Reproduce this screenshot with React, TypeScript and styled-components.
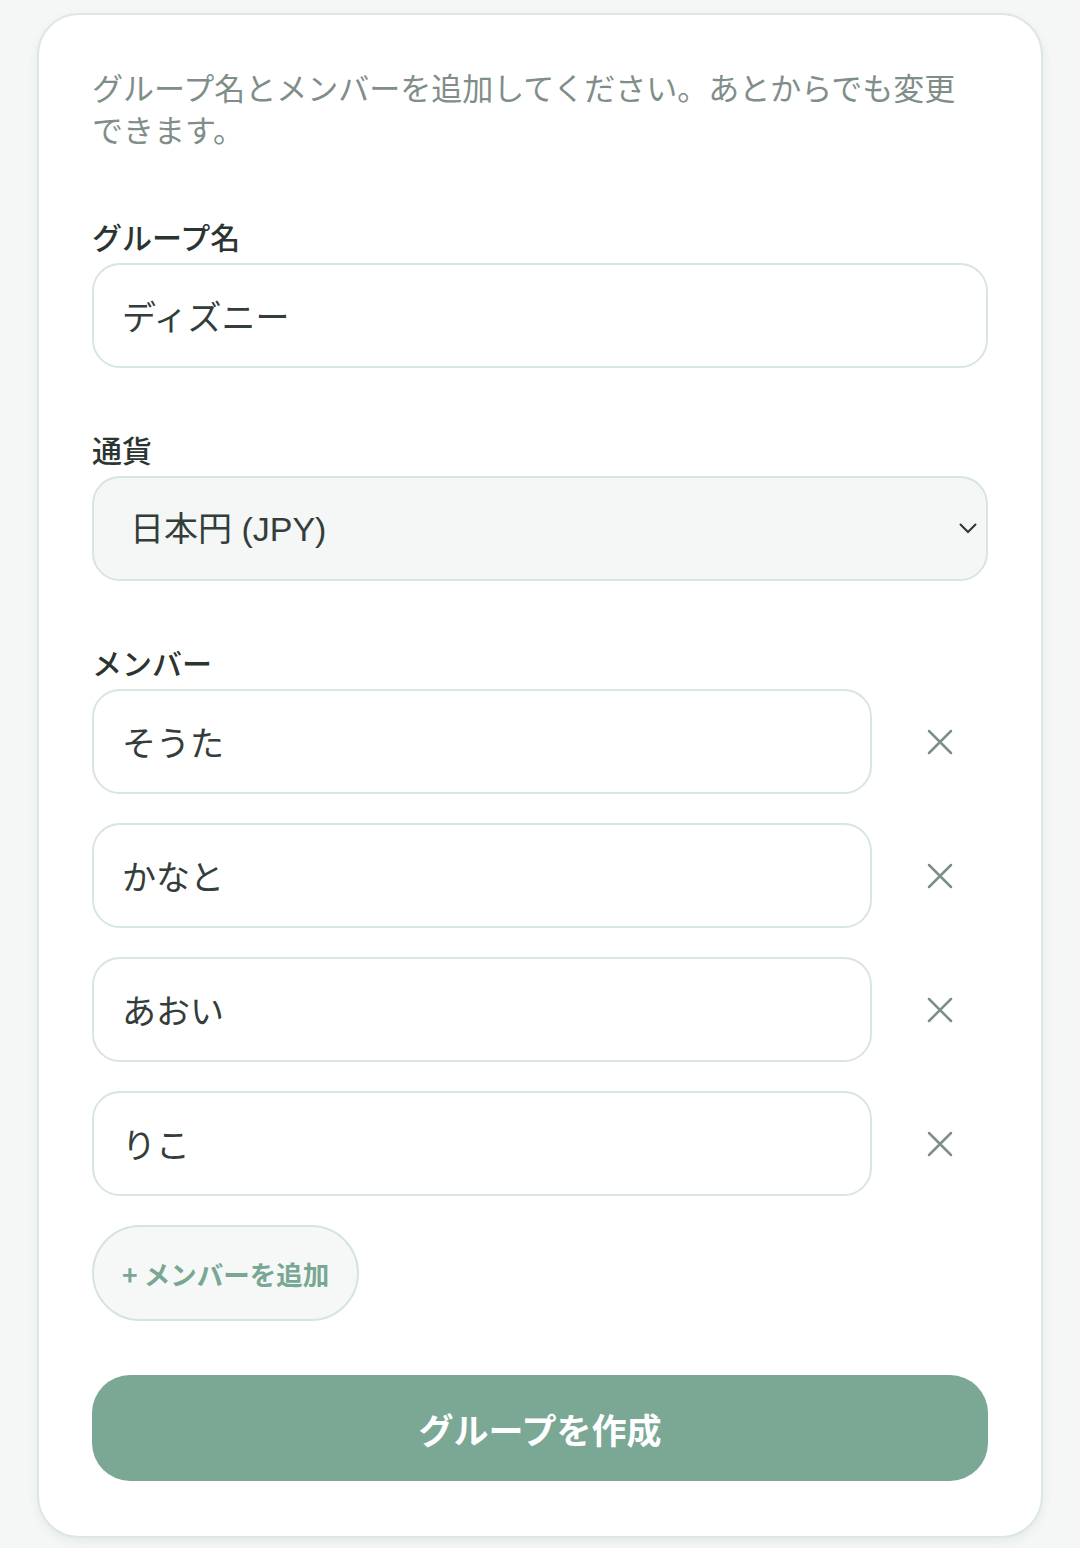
import { useState } from 'react';
import styled, { createGlobalStyle } from 'styled-components';

const GlobalStyle = createGlobalStyle`
  * {
    box-sizing: border-box;
  }
  body {
    margin: 0;
    background: #f4f7f6;
    font-family: "Noto Sans CJK JP", "Noto Sans", sans-serif;
    color: #2b3431;
  }
`;

const Page = styled.main`
  padding: 13px 37px 12px;
`;

const Card = styled.section`
  background: #ffffff;
  border: 2px solid #dce7e4;
  border-radius: 42px;
  box-shadow: 0 4px 10px rgba(60, 90, 80, 0.08);
  padding: 51px 53px 55px;
  display: flex;
  flex-direction: column;
`;

const Description = styled.p`
  margin: 0 0 66px;
  padding-right: 24px;
  font-size: 31px;
  line-height: 42px;
  color: #7f8e89;
`;

const Field = styled.div`
  display: flex;
  flex-direction: column;
  gap: 7px;
  margin-bottom: 61px;
`;

const Label = styled.label`
  font-size: 30px;
  line-height: 40px;
  font-weight: 500;
  color: #2b3431;
`;

const TextInput = styled.input<{ $grow?: boolean }>`
  flex: ${(p) => (p.$grow ? '1' : 'none')};
  width: 100%;
  min-width: 0;
  height: 105px;
  padding: 0 28px;
  border: 2px solid #d8e5e1;
  border-radius: 28px;
  background: #ffffff;
  font-family: inherit;
  font-size: 34px;
  color: #333d3a;
  outline: none;
`;

const SelectWrap = styled.div`
  position: relative;
`;

const Select = styled.select`
  appearance: none;
  width: 100%;
  height: 105px;
  padding: 0 60px 0 36px;
  border: 2px solid #d8e5e1;
  border-radius: 28px;
  background: #f4f7f6;
  font-family: "Liberation Sans", "Noto Sans CJK JP", sans-serif;
  font-size: 34px;
  color: #333d3a;
  outline: none;
`;

const Chevron = styled.svg`
  position: absolute;
  right: 11px;
  top: 47px;
  width: 18px;
  height: 11px;
  pointer-events: none;
`;

const MemberList = styled.div`
  display: flex;
  flex-direction: column;
  gap: 29px;
`;

const MemberRow = styled.div`
  display: flex;
  align-items: center;
  gap: 20px;
`;

const RemoveButton = styled.button`
  flex: none;
  width: 96px;
  height: 88px;
  display: flex;
  align-items: center;
  justify-content: center;
  border: none;
  background: transparent;
  padding: 0;
  cursor: pointer;
`;

const AddButton = styled.button`
  align-self: flex-start;
  margin-top: 29px;
  height: 96px;
  padding: 0 28px;
  border: 2px solid #d5e4df;
  border-radius: 48px;
  background: #f5f8f7;
  font-family: inherit;
  font-size: 26.5px;
  font-weight: 700;
  color: #78a794;
  cursor: pointer;
`;

const SubmitButton = styled.button`
  margin-top: 54px;
  height: 106px;
  border: none;
  border-radius: 38px;
  background: #7aa895;
  font-family: inherit;
  font-size: 35px;
  font-weight: 700;
  color: #ffffff;
  cursor: pointer;
`;

const CloseIcon = () => (
  <svg width="26" height="26" viewBox="0 0 26 26" fill="none">
    <path d="M2 2L24 24M24 2L2 24" stroke="#7d8f89" strokeWidth="2.5" strokeLinecap="round" />
  </svg>
);

export default function App() {
  const [members, setMembers] = useState(['そうた', 'かなと', 'あおい', 'りこ']);

  return (
    <Page>
      <GlobalStyle />
      <Card>
        <Description>
          グループ名とメンバーを追加してください。あとからでも変更できます。
        </Description>

        <Field>
          <Label>グループ名</Label>
          <TextInput defaultValue="ディズニー" />
        </Field>

        <Field>
          <Label>通貨</Label>
          <SelectWrap>
            <Select defaultValue="JPY">
              <option value="JPY">日本円 (JPY)</option>
              <option value="USD">米ドル (USD)</option>
            </Select>
            <Chevron viewBox="0 0 18 11" fill="none">
              <path d="M1.5 1.5L9 9L16.5 1.5" stroke="#333" strokeWidth="2" strokeLinecap="round" />
            </Chevron>
          </SelectWrap>
        </Field>

        <Field style={{ marginBottom: 0 }}>
          <Label>メンバー</Label>
          <MemberList>
            {members.map((m, i) => (
              <MemberRow key={m}>
                <TextInput $grow defaultValue={m} />
                <RemoveButton
                  aria-label="削除"
                  onClick={() => setMembers(members.filter((_, j) => j !== i))}
                >
                  <CloseIcon />
                </RemoveButton>
              </MemberRow>
            ))}
          </MemberList>
        </Field>

        <AddButton>+ メンバーを追加</AddButton>
        <SubmitButton>グループを作成</SubmitButton>
      </Card>
    </Page>
  );
}
